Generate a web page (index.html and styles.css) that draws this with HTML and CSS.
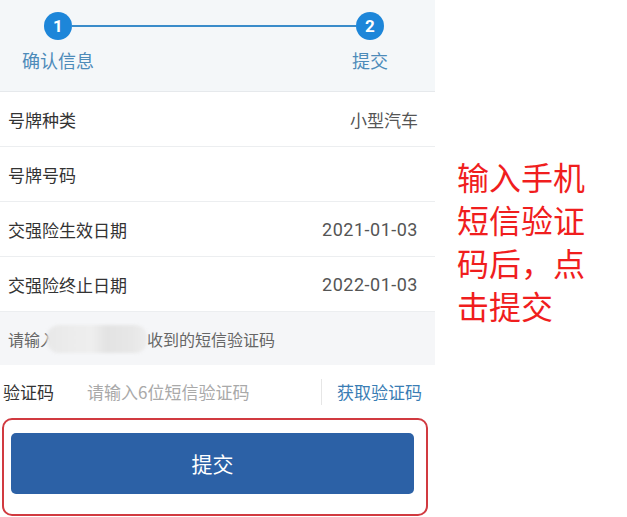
FILE: index.html
```html
<!DOCTYPE html>
<html lang="zh-CN">
<head>
<meta charset="utf-8">
<title>提交</title>
<link rel="stylesheet" href="styles.css">
</head>
<body>
<div class="page">
  <div class="panel">
    <div class="steps">
      <div class="dot">1</div>
      <div class="line"></div>
      <div class="dot">2</div>
      <div class="step-label">确认信息</div>
      <div></div>
      <div class="step-label">提交</div>
    </div>
    <div class="row"><span class="label">号牌种类</span><span class="value">小型汽车</span></div>
    <div class="row"><span class="label">号牌号码</span><span class="value"></span></div>
    <div class="row"><span class="label">交强险生效日期</span><span class="value num">2021-01-03</span></div>
    <div class="row"><span class="label">交强险终止日期</span><span class="value num">2022-01-03</span></div>
    <div class="info">请输入<span class="blur"></span>收到的短信验证码</div>
    <div class="code-row">
      <span class="code-label">验证码</span>
      <span class="placeholder">请输入6位短信验证码</span>
      <span class="sep"></span>
      <span class="get-code">获取验证码</span>
    </div>
    <div class="btn-area">
      <div class="highlight">
        <div class="submit">提交</div>
      </div>
    </div>
  </div>
  <div class="note">输入手机<br>短信验证<br>码后，点<br>击提交</div>
</div>
</body>
</html>
```

FILE: styles.css
```css
html, body {
  margin: 0;
  padding: 0;
  background: #ffffff;
}
body {
  font-family: Roboto, "Noto Sans CJK SC", sans-serif;
  color: #333;
}
.page {
  display: flex;
  width: 627px;
  height: 517px;
  overflow: hidden;
}
.panel {
  width: 435px;
  flex: none;
  background: #fff;
}
.steps {
  display: grid;
  grid-template-columns: 72px 1fr 72px;
  grid-template-rows: 28px 24px;
  row-gap: 8px;
  padding: 12px 29px 0 22px;
  height: 79px;
  background: #f4f7f9;
  border-bottom: 1px solid #e6e9ec;
}
.dot {
  justify-self: center;
  width: 28px;
  height: 28px;
  border-radius: 50%;
  background: #1d86d9;
  color: #fff;
  font-family: Roboto, sans-serif;
  font-weight: 700;
  font-size: 17px;
  line-height: 28px;
  text-align: center;
}
.line {
  align-self: center;
  height: 2px;
  margin: 0 -22px;
  background: #3a8cca;
}
.step-label {
  justify-self: center;
  font-family: "Noto Sans CJK SC", sans-serif;
  font-size: 18px;
  line-height: 24px;
  color: #4d8bb9;
  white-space: nowrap;
}
.row {
  display: flex;
  align-items: center;
  justify-content: space-between;
  height: 54px;
  padding: 0 17px 0 8px;
  border-bottom: 1px solid #eceef0;
}
.label {
  font-family: "Noto Sans CJK SC", sans-serif;
  font-size: 17px;
  color: #333;
}
.value {
  font-family: "Noto Sans CJK SC", sans-serif;
  font-size: 17px;
  color: #555;
}
.value.num {
  font-family: Roboto, sans-serif;
  font-size: 18px;
  letter-spacing: 0.5px;
  color: #555;
}
.info {
  display: flex;
  align-items: center;
  height: 53px;
  padding-left: 8px;
  background: #f5f6f8;
  font-family: "Noto Sans CJK SC", sans-serif;
  font-size: 16px;
  color: #666;
}
.blur {
  display: inline-block;
  width: 100px;
  height: 28px;
  margin-left: -9px;
  border-radius: 12px;
  background: linear-gradient(90deg, #e8e8e8 0%, #ececec 25%, #eeeeee 45%, #e3e3e3 60%, #e7e7e7 85%, #ededed 100%);
  filter: blur(1.5px);
}
.code-row {
  display: flex;
  align-items: center;
  height: 53px;
  padding-left: 3px;
}
.code-label {
  font-family: "Noto Sans CJK SC", sans-serif;
  font-size: 17px;
  color: #333;
  width: 84px;
}
.placeholder {
  font-family: "Noto Sans CJK SC", sans-serif;
  font-size: 17px;
  color: #a9a9a9;
  flex: 1;
}
.sep {
  width: 1px;
  height: 26px;
  background: #e6e6e6;
  margin-right: 15px;
}
.get-code {
  font-family: "Noto Sans CJK SC", sans-serif;
  font-size: 17px;
  color: #3a7db4;
  margin-right: 13px;
}
.btn-area {
  padding: 0 7px 0 2px;
}
.highlight {
  height: 81px;
  border: 2px solid #d13a40;
  border-radius: 10px;
  padding: 13px 12px 0 7px;
  box-sizing: content-box;
}
.submit {
  height: 61px;
  border-radius: 5px;
  background: #2c61a6;
  color: #fff;
  font-family: "Noto Sans CJK SC", sans-serif;
  font-size: 21px;
  line-height: 61px;
  text-align: center;
}
.note {
  padding: 155px 0 0 22px;
  font-family: "Noto Sans CJK SC", sans-serif;
  font-size: 32px;
  line-height: 43px;
  color: #f01e1e;
  white-space: nowrap;
}
```
